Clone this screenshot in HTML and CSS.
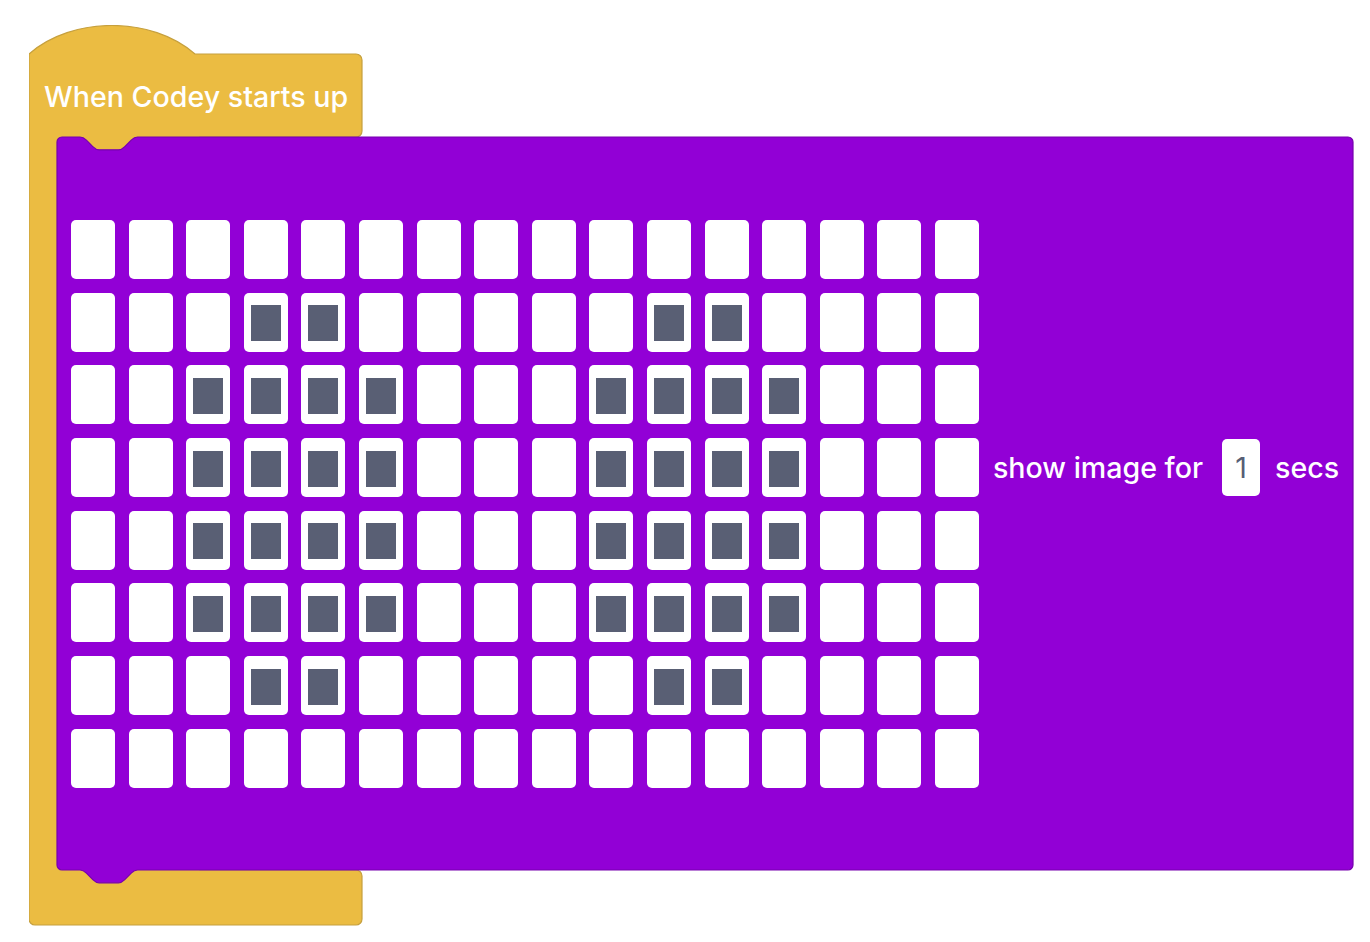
FILE: index.html
```html
<!DOCTYPE html>
<html lang="en">
<head>
<meta charset="utf-8">
<title>When Codey starts up</title>
<link rel="stylesheet" href="styles.css">
</head>
<body>
<div class="workspace">
  <div class="script">
    <svg class="shape" width="1326" height="902" viewBox="29 25 1326 902" aria-hidden="true">
      <path class="hat" d="M29,54 C72,16 152,16 195,54 H356 a6,6 0 0 1 6,6 V131 a6,6 0 0 1 -6,6 H200 V870 H356 a6,6 0 0 1 6,6 V919 a6,6 0 0 1 -6,6 H35 a6,6 0 0 1 -6,-6 Z"/>
      <path class="body" d="M57,142 a5,5 0 0 1 5,-5 H80 c3.2,0 4.8,1.6 6.4,3.2 l6.4,6.4 c1.6,1.6 3.2,3.2 6.4,3.2 h19.2 c3.2,0 4.8,-1.6 6.4,-3.2 l6.4,-6.4 c1.6,-1.6 3.2,-3.2 6.4,-3.2 H1348 a5,5 0 0 1 5,5 V865 a5,5 0 0 1 -5,5 H137.6 c-3.2,0 -4.8,1.6 -6.4,3.2 l-6.4,6.4 c-1.6,1.6 -3.2,3.2 -6.4,3.2 h-19.2 c-3.2,0 -4.8,-1.6 -6.4,-3.2 l-6.4,-6.4 c-1.6,-1.6 -3.2,-3.2 -6.4,-3.2 H62 a5,5 0 0 1 -5,-5 Z"/>
    </svg>
    <div class="hat-row"><span class="hat-label">When Codey starts up</span></div>
    <div class="c-body">
      <div class="matrix" id="matrix">
        <div class="cell"></div><div class="cell"></div><div class="cell"></div><div class="cell"></div><div class="cell"></div><div class="cell"></div><div class="cell"></div><div class="cell"></div><div class="cell"></div><div class="cell"></div><div class="cell"></div><div class="cell"></div><div class="cell"></div><div class="cell"></div><div class="cell"></div><div class="cell"></div>
        <div class="cell"></div><div class="cell"></div><div class="cell"></div><div class="cell on"></div><div class="cell on"></div><div class="cell"></div><div class="cell"></div><div class="cell"></div><div class="cell"></div><div class="cell"></div><div class="cell on"></div><div class="cell on"></div><div class="cell"></div><div class="cell"></div><div class="cell"></div><div class="cell"></div>
        <div class="cell"></div><div class="cell"></div><div class="cell on"></div><div class="cell on"></div><div class="cell on"></div><div class="cell on"></div><div class="cell"></div><div class="cell"></div><div class="cell"></div><div class="cell on"></div><div class="cell on"></div><div class="cell on"></div><div class="cell on"></div><div class="cell"></div><div class="cell"></div><div class="cell"></div>
        <div class="cell"></div><div class="cell"></div><div class="cell on"></div><div class="cell on"></div><div class="cell on"></div><div class="cell on"></div><div class="cell"></div><div class="cell"></div><div class="cell"></div><div class="cell on"></div><div class="cell on"></div><div class="cell on"></div><div class="cell on"></div><div class="cell"></div><div class="cell"></div><div class="cell"></div>
        <div class="cell"></div><div class="cell"></div><div class="cell on"></div><div class="cell on"></div><div class="cell on"></div><div class="cell on"></div><div class="cell"></div><div class="cell"></div><div class="cell"></div><div class="cell on"></div><div class="cell on"></div><div class="cell on"></div><div class="cell on"></div><div class="cell"></div><div class="cell"></div><div class="cell"></div>
        <div class="cell"></div><div class="cell"></div><div class="cell on"></div><div class="cell on"></div><div class="cell on"></div><div class="cell on"></div><div class="cell"></div><div class="cell"></div><div class="cell"></div><div class="cell on"></div><div class="cell on"></div><div class="cell on"></div><div class="cell on"></div><div class="cell"></div><div class="cell"></div><div class="cell"></div>
        <div class="cell"></div><div class="cell"></div><div class="cell"></div><div class="cell on"></div><div class="cell on"></div><div class="cell"></div><div class="cell"></div><div class="cell"></div><div class="cell"></div><div class="cell"></div><div class="cell on"></div><div class="cell on"></div><div class="cell"></div><div class="cell"></div><div class="cell"></div><div class="cell"></div>
        <div class="cell"></div><div class="cell"></div><div class="cell"></div><div class="cell"></div><div class="cell"></div><div class="cell"></div><div class="cell"></div><div class="cell"></div><div class="cell"></div><div class="cell"></div><div class="cell"></div><div class="cell"></div><div class="cell"></div><div class="cell"></div><div class="cell"></div><div class="cell"></div>
      </div>
      <div class="params">
        <span class="label">show image for</span>
        <span class="num">1</span>
        <span class="label secs">secs</span>
      </div>
    </div>
  </div>
</div>
</body>
</html>
```

FILE: styles.css
```css
html, body {
  margin: 0;
  padding: 0;
  background: #ffffff;
}

body {
  font-family: "Inter", "Noto Sans", sans-serif;
  width: 1370px;
  height: 942px;
  overflow: hidden;
}

.workspace {
  padding: 25px 0 0 29px;
}

.script {
  position: relative;
  box-sizing: border-box;
  width: 1326px;
  height: 902px;
  padding-top: 29px;
}

.shape {
  position: absolute;
  left: 0;
  top: 0;
  z-index: 0;
}

.hat {
  fill: #ebbc42;
  stroke: #c6a03e;
  stroke-width: 1.2;
}

.body {
  fill: #9200d6;
  stroke: #7600ad;
  stroke-width: 1.2;
}

.hat-row {
  position: relative;
  z-index: 1;
  box-sizing: border-box;
  height: 83px;
  padding: 4px 0 0 15px;
  display: flex;
  align-items: center;
}

.hat-label {
  color: #ffffff;
  font-size: 28.6px;
  font-weight: 500;
  line-height: 1;
  white-space: nowrap;
}

.c-body {
  position: relative;
  z-index: 1;
  margin-left: 28px;
  width: 1296px;
  height: 733px;
  box-sizing: border-box;
  padding: 83px 0 0 14px;
  display: flex;
  align-items: flex-start;
}

.matrix {
  display: grid;
  grid-template-columns: repeat(16, 44px);
  grid-auto-rows: 59px;
  column-gap: 13.6px;
  row-gap: 13.7px;
}

.cell {
  background: #ffffff;
  border-radius: 5px;
  display: flex;
  align-items: center;
  justify-content: center;
}

.cell.on::after {
  content: "";
  width: 30px;
  height: 36px;
  margin-top: 2px;
  background: #595f74;
}

.params {
  margin-left: 14px;
  margin-top: 219px;
  height: 57px;
  display: flex;
  align-items: center;
}

.label {
  color: #ffffff;
  font-size: 28.6px;
  font-weight: 500;
  line-height: 1;
  white-space: nowrap;
  padding-top: 2px;
}

.num {
  width: 38px;
  height: 57px;
  margin: 0 15px 0 19px;
  box-sizing: border-box;
  padding-top: 1px;
  background: #ffffff;
  border-radius: 5px;
  display: flex;
  align-items: center;
  justify-content: center;
  color: #575e75;
  font-size: 28.6px;
  line-height: 1;
}
```
